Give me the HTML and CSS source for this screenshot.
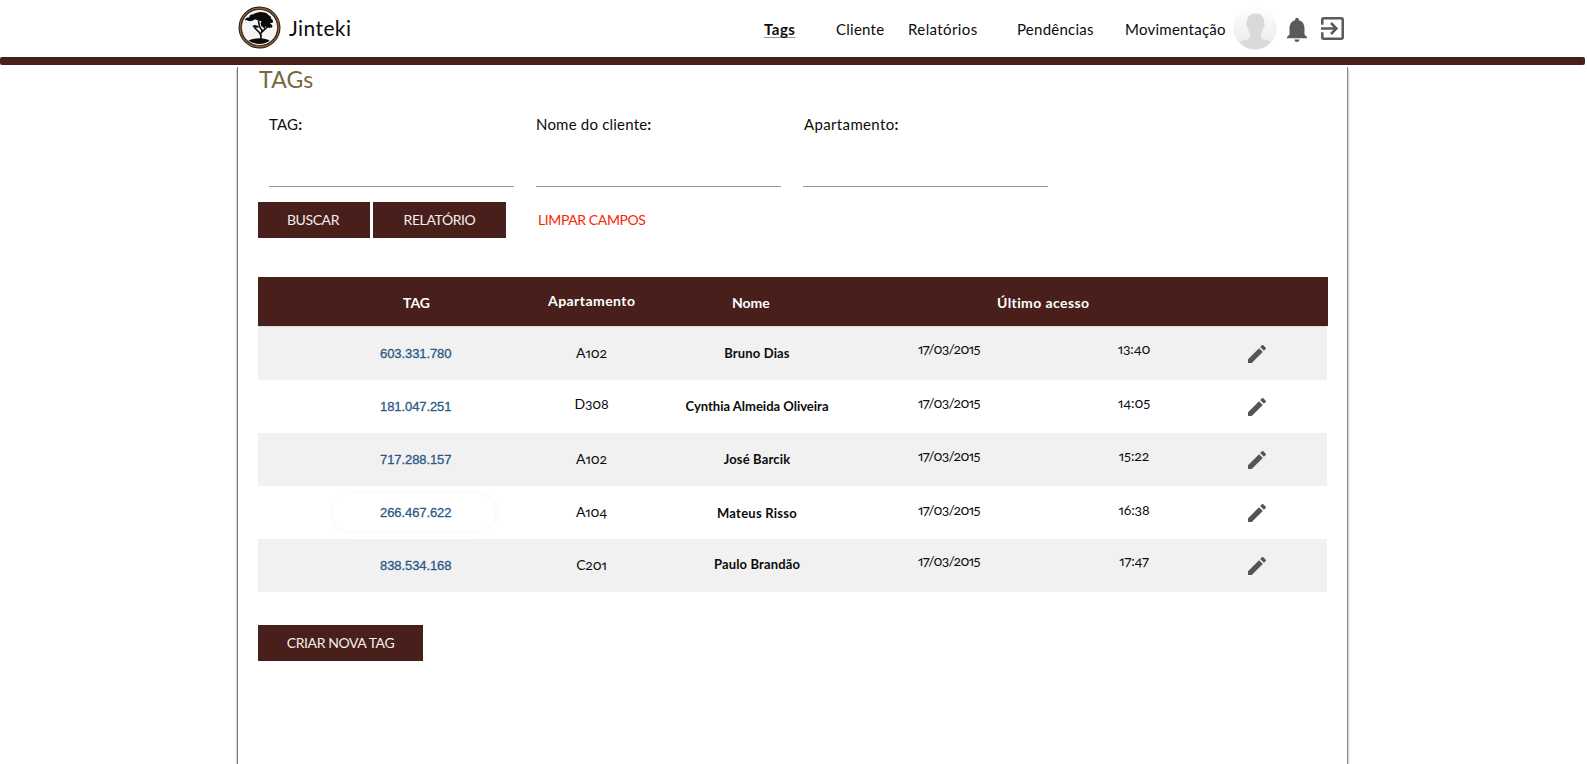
FILE: index.html
```html
<!DOCTYPE html>
<html lang="pt-BR">
<head>
<meta charset="utf-8">
<title>Jinteki - TAGs</title>
<link rel="stylesheet" href="styles.css">
</head>
<body>
<svg width="0" height="0" class="defs"><symbol id="pencil" viewBox="0 0 24 24"><path d="M3 17.25V21h3.75L17.81 9.94l-3.75-3.75L3 17.25zM20.71 7.04a1 1 0 0 0 0-1.41l-2.34-2.34a1 1 0 0 0-1.41 0l-1.83 1.83 3.75 3.75 1.83-1.83z"/></symbol></svg>
<header class="topbar">
  <div class="brand">
    <svg class="logo" viewBox="0 0 42 42">
      <circle cx="21" cy="21" r="20.500" fill="#1d1210"/><circle cx="21" cy="21" r="19" fill="none" stroke="#8d6b3a" stroke-width="1.200"/><circle cx="21" cy="21" r="17.600" fill="#f6f5f5" stroke="#4a1d1a" stroke-width=".8"/>
      <path d="M7 13q1-2 4-2 0-3 4-3 5-3 9-2 4 0 6 3 3 1 2 3 3 2 2 4l-3 1q4 2 2 4-4 1-6-1-2 1-4 0l-1-3 1-2-4-1-2-1q-3 2-6 2l-2-1q-3 0-2-1z" fill="#0c0a0a"/>
      <path d="M14 20q2-2 4-1 3 0 2 2-4 1-6-1z" fill="#0c0a0a"/>
      <path d="M20 14l1 6 3 5 5-5M24 23l-2 5 1 7M16 21l5 5 2 4M24 18l2 4" fill="none" stroke="#0c0a0a" stroke-width="1.500"/>
      <path d="M10 34q4-2.500 11-2.500t10 2.500q-4 3-10 3t-11-3z" fill="#0c0a0a"/>
    </svg>
    <span class="brand-name">Jinteki</span>
  </div>
  <nav class="nav">
    <a class="nav-tags">Tags</a><a class="nav-cliente">Cliente</a><a class="nav-rel">Relatórios</a><a class="nav-pend">Pendências</a><a class="nav-mov">Movimentação</a>
  </nav>
  <svg class="avatar" viewBox="0 0 44 44"><defs><clipPath id="round"><circle cx="22" cy="21" r="21"/></clipPath><linearGradient id="fade" x1="0" y1="0" x2="0" y2="1"><stop offset="0" stop-color="#fff"/><stop offset="1" stop-color="#e9e9e9"/></linearGradient></defs><circle cx="22" cy="21" r="21.800" fill="url(#fade)"/><path clip-path="url(#round)" d="M22.500 6.500c6 0 9 4 8.600 9 1.400.5.400 5-1 5.500-.6 3-1.500 4.500-2.100 6v3.500c2 3 10 3 13 6V44H4v-7.500c3-3 11-3 13-6V27c-.6-1.500-1.500-3-2.100-6-1.400-.5-2.400-5-1-5.500-.4-5 2.600-9 8.600-9z" fill="#d9d9d9"/></svg>
  <svg class="bell" viewBox="4 2 16 20" preserveAspectRatio="none"><path d="M12 22c1.100 0 2-.9 2-2h-4a2 2 0 0 0 2 2zm6-6v-5c0-3.070-1.640-5.640-4.500-6.320V4a1.500 1.500 0 0 0-3 0v.68C7.630 5.360 6 7.920 6 11v5l-2 2v1h16v-1l-2-2z"/></svg>
  <svg class="exit" viewBox="3 3 18 18"><path d="M10.090 15.590 11.500 17l5-5-5-5-1.410 1.410L12.670 11H3v2h9.670l-2.580 2.590zM19 3H5a2 2 0 0 0-2 2v4h2V5h14v14H5v-4H3v4c0 1.100.89 2 2 2h14c1.100 0 2-.9 2-2V5c0-1.100-.9-2-2-2z"/></svg>
</header>
<div class="stripe"></div>
<main class="panel">
  <h1 class="title">TAGs</h1>
  <div class="fields">
    <label class="field f-tag">TAG<b>:</b></label>
    <label class="field f-nome">Nome do cliente<b>:</b></label>
    <label class="field f-apt">Apartamento<b>:</b></label>
  </div>
  <div class="actions">
    <button class="btn b-buscar">BUSCAR</button><button class="btn b-rel">RELATÓRIO</button><a class="clear">LIMPAR CAMPOS</a>
  </div>
  <section class="table">
    <div class="head"><span class="h-tag">TAG</span><span class="h-apt">Apartamento</span><span class="h-nome">Nome</span><span class="h-acc">Último acesso</span></div>
    <div class="row r1"><span class="tag">603.331.780</span><span class="apt">A102</span><span class="nome">Bruno Dias</span><span class="date">17/03/2015</span><span class="time">13:40</span><svg class="edit"><use href="#pencil"/></svg></div>
    <div class="row r2"><span class="tag">181.047.251</span><span class="apt">D308</span><span class="nome">Cynthia Almeida Oliveira</span><span class="date">17/03/2015</span><span class="time">14:05</span><svg class="edit"><use href="#pencil"/></svg></div>
    <div class="row r3"><span class="tag">717.288.157</span><span class="apt">A102</span><span class="nome">José Barcik</span><span class="date">17/03/2015</span><span class="time">15:22</span><svg class="edit"><use href="#pencil"/></svg></div>
    <div class="row r4"><span class="tag">266.467.622</span><span class="apt">A104</span><span class="nome">Mateus Risso</span><span class="date">17/03/2015</span><span class="time">16:38</span><svg class="edit"><use href="#pencil"/></svg></div>
    <div class="row r5"><span class="tag">838.534.168</span><span class="apt">C201</span><span class="nome">Paulo Brandão</span><span class="date">17/03/2015</span><span class="time">17:47</span><svg class="edit"><use href="#pencil"/></svg></div>
  </section>
  <button class="btn b-new">CRIAR NOVA TAG</button>
</main>
</body>
</html>
```
FILE: styles.css
```css
* { box-sizing: border-box; }
body { margin: 0; height: 764px; overflow: hidden; background: #fff; color: #0c0c0c; font-family: Lato, "Noto Sans", sans-serif; font-size: 15px; font-feature-settings: "onum" 1, "pnum" 1; }
.defs { display: block; }
.topbar { height: 57px; display: flex; align-items: flex-start; padding-left: 238px; }
.brand { display: flex; width: 526px; padding-top: 6px; gap: 8px; }
.logo { width: 43px; height: 43px; }
.brand-name { font-size: 21px; line-height: 43px; letter-spacing: .4px; }
.nav { display: grid; grid-template-columns: 72px 72px 109px 108px 108px; line-height: 58px; white-space: nowrap; letter-spacing: .25px; }
.nav-tags { font-weight: bold; letter-spacing: .5px; text-decoration: underline; text-decoration-color: #999; text-decoration-thickness: 1px; text-underline-offset: 2px; }
.nav-tags { justify-self: start; }
.nav-rel { letter-spacing: .4px; }
.avatar { width: 44px; height: 44px; margin: 7px 0 0 0; }
.bell { width: 20px; height: 25px; margin: 17px 0 0 10px; fill: #5b5b5b; }
.exit { width: 23px; height: 23px; margin: 17px 0 0 14px; fill: #5b5b5b; }
.stripe { height: 8px; width: 1585px; border-radius: 2px; background: #481f1a; }
.panel { margin: 2px 0 0 237px; width: 1111px; height: 697px; padding: 0 19px 0 20px; border-left: 1px solid #777; border-right: 1px solid #888; box-shadow: 0 2px 2px #888; }
.title { margin: 0; padding-left: 1px; height: 45px; line-height: 24px; font-size: 23px; font-weight: normal; letter-spacing: .2px; color: #77693a; }
.fields { display: flex; gap: 22px; padding-left: 11px; }
.field { width: 245px; height: 75px; line-height: 24px; border-bottom: 1px solid #999; letter-spacing: .2px; }
.f-apt { padding-left: 1px; letter-spacing: .35px; }
.actions { display: flex; margin-top: 15px; height: 36px; }
.btn { display: block; height: 36px; border: 0; padding: 0 0 2px; margin: 0; background: #481f1a; color: #f4eeee; font: 14px Lato, sans-serif; letter-spacing: -.4px; }
.b-buscar { width: 112px; margin-right: 3px; padding-right: 2px; }
.b-rel { width: 133px; margin-right: 32px; }
.clear { color: #fa2400; font-size: 14px; line-height: 35px; letter-spacing: -.4px; }
.table { margin-top: 39px; width: 1070px; }
.head { height: 49px; background: #481f1a; color: #fff; font-size: 14px; font-weight: bold; display: grid; grid-template-columns: 145px 145px 184px 265px 1fr; line-height: 51px; white-space: nowrap; }
.h-tag { grid-column: 2; }
.h-apt { line-height: 48px; letter-spacing: .45px; }
.h-acc { letter-spacing: .4px; }
.row { display: grid; grid-template-columns: 122px 171px 81px 250px 132px 234px 79px; width: 1069px; height: 53px; line-height: 53px; white-space: nowrap; font-size: 14px; }
.row:nth-child(even) { background: #f1f1f1; }
.r1 { height: 54px; border-top: 1px solid #ddd; }
.tag { position: relative; grid-column: 2; color: #2b5785; font: 13px "Liberation Sans", sans-serif; line-height: 53px; letter-spacing: -.08px; -webkit-text-stroke: .3px #2b5785; }
.r4 .tag::before { content: ""; position: absolute; left: -46px; top: 8px; width: 161px; height: 37px; border-radius: 20px; box-shadow: 0 0 8px #f6f6f6; }
.apt, .time { letter-spacing: -.15px; }
.apt, .nome, .time { text-align: center; }
.nome { font-weight: bold; font-size: 13px; letter-spacing: .15px; }
.apt { line-height: 51px; }
.date, .time { line-height: 43px; }
.date { padding-left: 36px; letter-spacing: -.7px; }
.r2 .nome { letter-spacing: 0; }
.r2 .apt { line-height: 47px; }
.r2 .date, .r2 .time, .r3 .date, .r3 .time { line-height: 45px; }
.r4 .nome { line-height: 55px; letter-spacing: .25px; }
.r4 .date, .r4 .time { line-height: 47px; }
.r5 .nome, .r5 .apt { line-height: 51px; }
.r5 .date, .r5 .time { line-height: 43px; }
.time { padding-left: 6px; }
.edit { width: 24px; height: 24px; fill: #555; margin-top: 15px; margin-left: -3px; }
.b-new { margin-top: 33px; width: 165px; }
```
